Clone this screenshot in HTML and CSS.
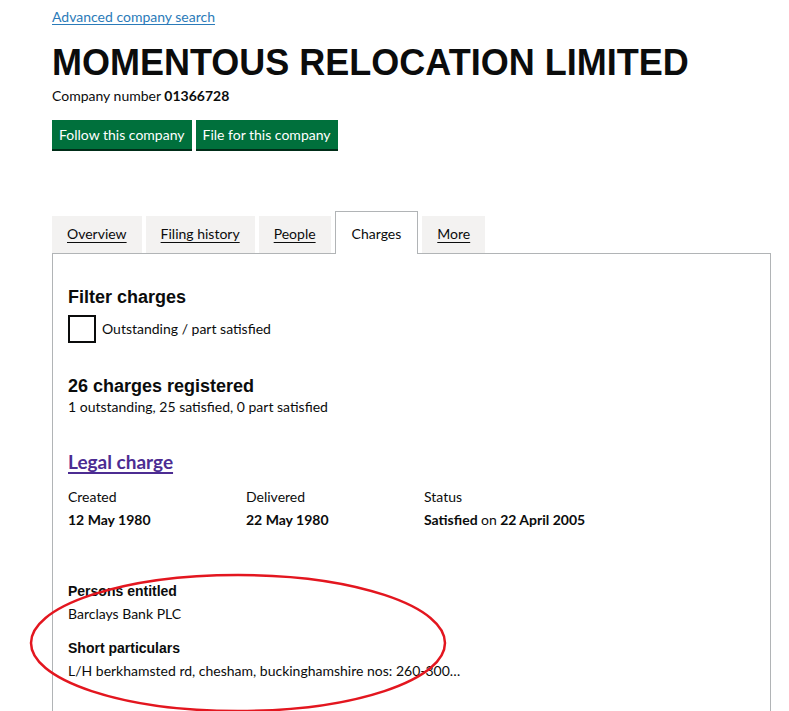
FILE: index.html
```html
<!DOCTYPE html>
<html>
<head>
<meta charset="utf-8">
<link rel="stylesheet" href="styles.css">
</head>
<body>
<div class="page">
  <a class="top-link" href="#">Advanced company search</a>
  <h1 class="title">MOMENTOUS RELOCATION LIMITED</h1>
  <p class="company-number">Company number <strong>01366728</strong></p>
  <div class="actions">
    <a class="btn" href="#">Follow this company</a>
    <a class="btn" href="#">File for this company</a>
  </div>
  <ul class="tabs">
    <li class="tab"><a href="#">Overview</a></li>
    <li class="tab"><a href="#">Filing history</a></li>
    <li class="tab"><a href="#">People</a></li>
    <li class="tab active"><span>Charges</span></li>
    <li class="tab"><a href="#">More</a></li>
  </ul>
  <div class="panel">
    <h2 class="h-filter">Filter charges</h2>
    <label class="check"><span class="box"></span><span>Outstanding / part satisfied</span></label>
    <h2 class="h-count">26 charges registered</h2>
    <p class="summary">1 outstanding, 25 satisfied, 0 part satisfied</p>
    <a class="charge-link" href="#">Legal charge</a>
    <div class="dates">
      <div class="col"><div class="lbl">Created</div><div class="val">12 May 1980</div></div>
      <div class="col"><div class="lbl">Delivered</div><div class="val">22 May 1980</div></div>
      <div class="col"><div class="lbl">Status</div><div class="val">Satisfied <span class="normal">on</span> 22 April 2005</div></div>
    </div>
    <h3 class="h-small persons">Persons entitled</h3>
    <p class="detail">Barclays Bank PLC</p>
    <h3 class="h-small particulars">Short particulars</h3>
    <p class="detail">L/H berkhamsted rd, chesham, buckinghamshire nos: 260-300…</p>
  </div>
</div>
<svg class="annotation" width="789" height="711" viewBox="0 0 789 711">
  <ellipse cx="238" cy="643" rx="207" ry="68" fill="none" stroke="#e3161f" stroke-width="2.5"/>
</svg>
</body>
</html>
```

FILE: styles.css
```css
html, body {
  margin: 0;
  padding: 0;
  background: #ffffff;
}
body {
  font-family: Lato, "Noto Sans", sans-serif;
  font-size: 14px;
  line-height: 20px;
  color: #0b0c0c;
  position: relative;
  width: 789px;
  height: 711px;
  overflow: hidden;
}
.page {
  padding: 7px 18px 0 52px;
}
.top-link {
  display: inline-block;
  color: #2b7bb9;
  text-decoration: underline;
  text-underline-offset: 2px;
  line-height: 20px;
}
.title {
  font-family: "Liberation Sans", Arial, sans-serif;
  font-weight: 700;
  font-size: 36px;
  line-height: 40px;
  margin: 16px 0 0;
}
.company-number {
  margin: 3px 0 0;
  line-height: 20px;
}
.company-number strong {
  font-weight: 700;
}
.actions {
  display: flex;
  gap: 4px;
  margin-top: 14px;
}
.btn {
  display: block;
  background: #00703c;
  color: #ffffff;
  text-decoration: none;
  padding: 5px 7px;
  line-height: 19px;
  box-shadow: 0 2px 0 #002d18;
}
.tabs {
  list-style: none;
  margin: 62px 0 0;
  padding: 0;
  display: flex;
  align-items: flex-end;
  gap: 4px;
  position: relative;
  z-index: 1;
}
.tab {
  background: #f3f2f1;
  padding: 8px 15px 9px;
  line-height: 20px;
}
.tab a {
  color: #0b0c0c;
  text-decoration: underline;
  text-underline-offset: 3px;
}
.tab.active {
  background: #ffffff;
  border: 1px solid #b1b4b6;
  border-bottom: none;
  padding: 12px 16px 10px;
  margin-bottom: -1px;
}
.panel {
  border: 1px solid #b1b4b6;
  border-bottom: none;
  padding: 32px 15px 0;
  height: 460px;
}
.h-filter, .h-count {
  font-family: "Liberation Sans", Arial, sans-serif;
  font-weight: 700;
  font-size: 18px;
  line-height: 22px;
  margin: 0;
}
.check {
  display: flex;
  align-items: center;
  gap: 6px;
  margin-top: 7px;
}
.box {
  width: 24px;
  height: 24px;
  border: 2px solid #0b0c0c;
  display: block;
}
.h-count {
  margin-top: 32px;
}
.summary {
  margin: 0;
}
.charge-link {
  display: inline-block;
  margin-top: 32px;
  font-weight: 700;
  font-size: 19px;
  line-height: 26px;
  color: #4c2c92;
  text-decoration: underline;
  text-underline-offset: 3px;
  text-decoration-thickness: 2px;
}
.dates {
  display: flex;
  margin-top: 12px;
}
.col {
  width: 178px;
}
.lbl {
  line-height: 20px;
}
.val {
  margin-top: 3px;
  font-weight: 700;
  line-height: 20px;
}
.val .normal {
  font-weight: 400;
}
.h-small {
  font-family: "Liberation Sans", Arial, sans-serif;
  font-weight: 700;
  font-size: 14px;
  line-height: 20px;
  margin: 0;
}
.persons {
  margin-top: 51px;
}
.particulars {
  margin-top: 14px;
}
.detail {
  margin: 3px 0 0;
}
.annotation {
  position: absolute;
  left: 0;
  top: 0;
  pointer-events: none;
}
```
